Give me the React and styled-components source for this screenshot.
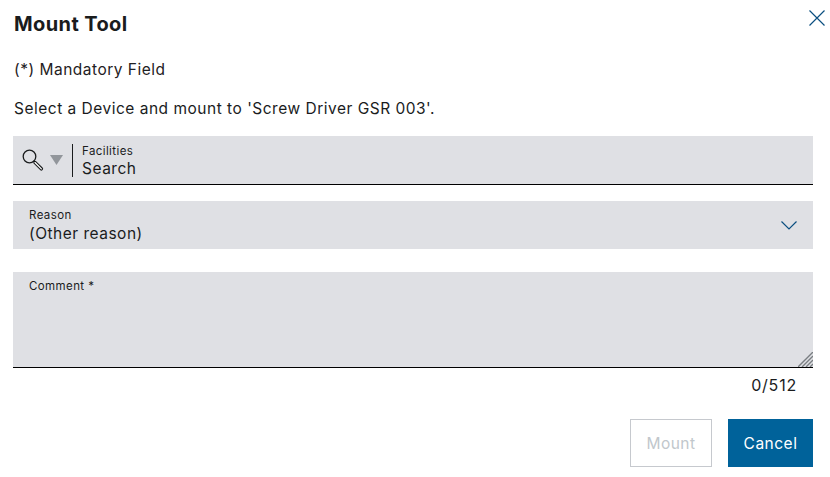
import React from "react";
import styled, { createGlobalStyle } from "styled-components";

const GlobalStyle = createGlobalStyle`
  html, body {
    margin: 0;
    background: #ffffff;
  }
  * {
    box-sizing: border-box;
  }
`;

const Dialog = styled.div`
  position: relative;
  width: 830px;
  height: 477px;
  padding: 12px 17px 0 13px;
  font-family: "Inter", sans-serif;
  font-size: 16px;
  letter-spacing: 0.5px;
  color: #1a1c1d;
`;

const Title = styled.h1`
  margin: 0;
  font-size: 20px;
  line-height: 24px;
  font-weight: 700;
  letter-spacing: 0.4px;
  padding-left: 1px;
`;

const CloseButton = styled.button`
  position: absolute;
  top: 9px;
  right: 4px;
  width: 18px;
  height: 18px;
  padding: 0;
  border: 0;
  background: none;
  line-height: 0;
`;

const Note = styled.p`
  margin: 23px 0 0;
  line-height: 22px;
  font-size: 15.5px;
  color: #1f2123;
  padding-left: 1px;
`;

const Intro = styled.p`
  margin: 17px 0 0;
  line-height: 22px;
  font-size: 15.5px;
  padding-left: 1px;
`;

const Field = styled.div`
  display: flex;
  align-items: ${(props) => (props.$top ? "flex-start" : "center")};
  height: ${(props) => props.$height}px;
  margin-top: ${(props) => props.$gap}px;
  padding: ${(props) => (props.$top ? "7px 16px" : "0 15px 0 16px")};
  position: relative;
  background: #dfe0e4;
  border-bottom: ${(props) => (props.$line ? "1px solid #000000" : "0")};
`;

const SearchField = styled(Field)`
  padding: 0 0 0 9px;
`;

const SearchIcons = styled.div`
  display: flex;
  align-items: center;
  gap: 5px;
  height: 33px;
  width: 51px;
  border-right: 1px solid #1a1c1d;
  flex-shrink: 0;
`;

const FieldText = styled.div`
  display: flex;
  flex-direction: column;
  flex: 1;
  padding-top: 1px;
`;

const SearchText = styled(FieldText)`
  margin-left: 9px;
  padding-top: 3px;
`;

const Label = styled.span`
  font-size: 11.5px;
  line-height: 14px;
  letter-spacing: 0.4px;
`;

const Value = styled.span`
  margin-top: ${(props) => (props.$tight ? 0 : 1)}px;
  font-size: 15.5px;
  line-height: 21px;
`;

const Grip = styled.svg`
  position: absolute;
  right: 0;
  bottom: 0;
`;

const Counter = styled.div`
  margin-top: 7px;
  padding-right: 16px;
  text-align: right;
  font-size: 16px;
  letter-spacing: 0.8px;
  line-height: 20px;
`;

const Actions = styled.div`
  display: flex;
  justify-content: flex-end;
  gap: 16px;
  margin-top: 24px;
`;

const Button = styled.button`
  height: 48px;
  width: ${(props) => props.$width}px;
  padding: 0;
  font-family: inherit;
  font-size: 15.5px;
  letter-spacing: 0.5px;
  border: 1px solid ${(props) => (props.$primary ? "#00629a" : "#c6c9ce")};
  background: ${(props) => (props.$primary ? "#00629a" : "#ffffff")};
  color: ${(props) => (props.$primary ? "#ffffff" : "#c1c7cc")};
`;

const SearchGlyph = () => (
  <svg width="23" height="23" viewBox="0 0 23 23" fill="none">
    <circle cx="7.5" cy="7.5" r="6.3" stroke="#1a1c1d" strokeWidth="1.3" />
    <path d="M12 12.2l1.6 0.2 6.6 6.6a1.1 1.1 0 0 1-1.7 1.7l-6.6-6.6z" fill="#ffffff" stroke="#1a1c1d" strokeWidth="1.1" />
  </svg>
);

const App = () => {
  return (
    <>
      <GlobalStyle />
      <Dialog>
        <Title>Mount Tool</Title>
        <CloseButton aria-label="Close">
          <svg width="18" height="18" viewBox="0 0 18 18" fill="none">
            <path d="M1.5 1.5l15 15M16.5 1.5l-15 15" stroke="#0b4f80" strokeWidth="1.2" />
          </svg>
        </CloseButton>
        <Note>(*) Mandatory Field</Note>
        <Intro>Select a Device and mount to 'Screw Driver GSR 003'.</Intro>

        <SearchField $height={49} $gap={16} $line>
          <SearchIcons>
            <SearchGlyph />
            <svg width="13" height="10" viewBox="0 0 13 10">
              <path d="M0 0h13l-6.5 10z" fill="#92969b" />
            </svg>
          </SearchIcons>
          <SearchText>
            <Label>Facilities</Label>
            <Value $tight>Search</Value>
          </SearchText>
        </SearchField>

        <Field $height={48} $gap={16}>
          <FieldText>
            <Label>Reason</Label>
            <Value>(Other reason)</Value>
          </FieldText>
          <svg width="18" height="10" viewBox="0 0 18 10" fill="none">
            <path d="M1.5 1.5l7.5 7.5 7.5-7.5" stroke="#0b4f80" strokeWidth="1.2" />
          </svg>
        </Field>

        <Field $height={96} $gap={23} $line $top>
          <Label>Comment *</Label>
          <Grip width="15" height="15" viewBox="0 0 15 15" fill="none">
            <path d="M0 15L15 0M4 15L15 4M8 15l7-7M12 15l3-3" stroke="#7a7e82" strokeWidth="1.4" />
          </Grip>
        </Field>
        <Counter>0/512</Counter>

        <Actions>
          <Button $width={82} disabled>Mount</Button>
          <Button $width={85} $primary>Cancel</Button>
        </Actions>
      </Dialog>
    </>
  );
};

export default App;
